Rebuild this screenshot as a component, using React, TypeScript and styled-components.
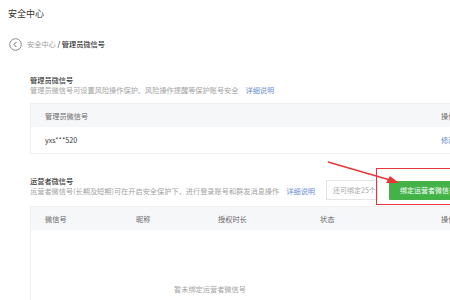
import React from "react";
import styled, { createGlobalStyle } from "styled-components";

const Global = createGlobalStyle`
  html, body { margin: 0; padding: 0; background: #fff; }
  body { font-family: "Noto Sans CJK SC", "Noto Sans", sans-serif; }
`;

const Page = styled.div`
  position: relative;
  width: 450px;
  height: 300px;
  overflow: hidden;
  background: #fff;
  color: #333;
`;

const PageTitle = styled.div`
  padding: 8px 0 0 8px;
  font-size: 9px;
  line-height: 12px;
  color: #353535;
`;

const Crumbs = styled.div`
  display: flex;
  align-items: center;
  gap: 5px;
  margin-top: 17px;
  padding-left: 9px;
  height: 14px;
  font-size: 7.2px;
  line-height: 14px;
`;

const BackIcon = styled.span`
  display: inline-flex;
  width: 13px;
  height: 13px;
`;

const CrumbMuted = styled.span`
  color: #9a9a9a;
`;

const CrumbCurrent = styled.span`
  color: #353535;
  font-weight: 500;
`;

const Content = styled.div`
  width: 437px;
  margin-left: 30px;
`;

const Section = styled.div<{ $top: number }>`
  margin-top: ${(p) => p.$top}px;
`;

const SectionHead = styled.div`
  display: flex;
  justify-content: space-between;
  align-items: flex-start;
  height: 20px;
`;

const SectionTitle = styled.div`
  font-size: 7.2px;
  line-height: 10px;
  color: #353535;
  font-weight: 500;
`;

const Desc = styled.div`
  font-size: 7.2px;
  line-height: 10px;
  color: #a3a3a3;
  white-space: nowrap;
`;

const Link = styled.span`
  color: #6a8fd4;
  margin-left: 7px;
`;

const Controls = styled.div`
  display: flex;
  align-items: center;
  gap: 11px;
  margin-top: 4px;
`;

const CountInput = styled.div`
  box-sizing: border-box;
  width: 52px;
  height: 20px;
  border: 1px solid #e4e4e4;
  padding-left: 6px;
  font-size: 7px;
  line-height: 18px;
  color: #a8a8a8;
  white-space: nowrap;
  overflow: hidden;
`;

const GreenButton = styled.div`
  box-sizing: border-box;
  width: 78px;
  height: 19px;
  background: #43b348;
  color: #fff;
  font-size: 7px;
  line-height: 19px;
  padding-left: 11px;
  white-space: nowrap;
  border-radius: 1px;
`;

const Card = styled.div<{ $top: number }>`
  margin-top: ${(p) => p.$top}px;
  border: 1px solid #efefef;
  box-shadow: 0 0 1px rgba(0, 0, 0, 0.03);
`;

const Row = styled.div<{ $cols: string; $head?: boolean; $h: number }>`
  display: grid;
  grid-template-columns: ${(p) => p.$cols};
  align-items: center;
  height: ${(p) => p.$h}px;
  padding-left: 14px;
  background: ${(p) => (p.$head ? "#f6f7f9" : "#fff")};
  font-size: 7.2px;
  color: ${(p) => (p.$head ? "#6a6a6a" : "#353535")};
  white-space: nowrap;
`;

const Op = styled.span<{ $link?: boolean }>`
  color: ${(p) => (p.$link ? "#6a8fd4" : "#6a6a6a")};
`;

const Empty = styled.div`
  height: 100px;
  box-sizing: border-box;
  padding: 54px 0 0 143px;
  font-size: 7.2px;
  line-height: 10px;
  color: #a3a3a3;
`;

const RedBox = styled.div`
  position: absolute;
  left: 376px;
  top: 168px;
  width: 90px;
  height: 35px;
  border: 1.5px solid #e5373a;
`;

const Arrow = styled.svg`
  position: absolute;
  left: 320px;
  top: 155px;
  overflow: visible;
`;

export default function App() {
  const cols2 = "91px 82px 102px 121px 1fr";
  return (
    <Page>
      <Global />
      <PageTitle>安全中心</PageTitle>
      <Crumbs>
        <BackIcon>
          <svg width="13" height="13" viewBox="0 0 13 13">
            <circle cx="6.5" cy="6.5" r="5.8" fill="none" stroke="#8a8a8a" strokeWidth="1" />
            <path d="M7.4 4 L5 6.5 L7.4 9" fill="none" stroke="#6a6a6a" strokeWidth="1" />
          </svg>
        </BackIcon>
        <span>
          <CrumbMuted>安全中心</CrumbMuted> <CrumbCurrent>/ 管理员微信号</CrumbCurrent>
        </span>
      </Crumbs>
      <Content>
        <Section $top={24}>
          <SectionTitle>管理员微信号</SectionTitle>
          <Desc>
            管理员微信号可设置风险操作保护、风险操作提醒等保护账号安全<Link>详细说明</Link>
          </Desc>
          <Card $top={8}>
            <Row $cols="396px 1fr" $head $h={23}>
              <span>管理员微信号</span>
              <Op>操作</Op>
            </Row>
            <Row $cols="396px 1fr" $h={26}>
              <span>yxs***520</span>
              <Op $link>修改</Op>
            </Row>
          </Card>
        </Section>
        <Section $top={22}>
          <SectionHead>
            <div>
              <SectionTitle>运营者微信号</SectionTitle>
              <Desc>
                运营者微信号(长期及短期)可在开启安全保护下，进行登录账号和群发消息操作<Link>详细说明</Link>
              </Desc>
            </div>
            <Controls>
              <CountInput>还可绑定25个</CountInput>
              <GreenButton>绑定运营者微信号</GreenButton>
            </Controls>
          </SectionHead>
          <Card $top={10}>
            <Row $cols={cols2} $head $h={23}>
              <span>微信号</span>
              <span>昵称</span>
              <span>授权时长</span>
              <span>状态</span>
              <Op>操作</Op>
            </Row>
            <Empty>暂未绑定运营者微信号</Empty>
          </Card>
        </Section>
      </Content>
      <RedBox />
      <Arrow width="90" height="40" viewBox="0 0 90 40">
        <path d="M8 7 L70 25" stroke="#e5373a" strokeWidth="1.4" fill="none" />
        <path d="M79 28 L66 28 L70 21 Z" fill="#e5373a" />
      </Arrow>
    </Page>
  );
}
